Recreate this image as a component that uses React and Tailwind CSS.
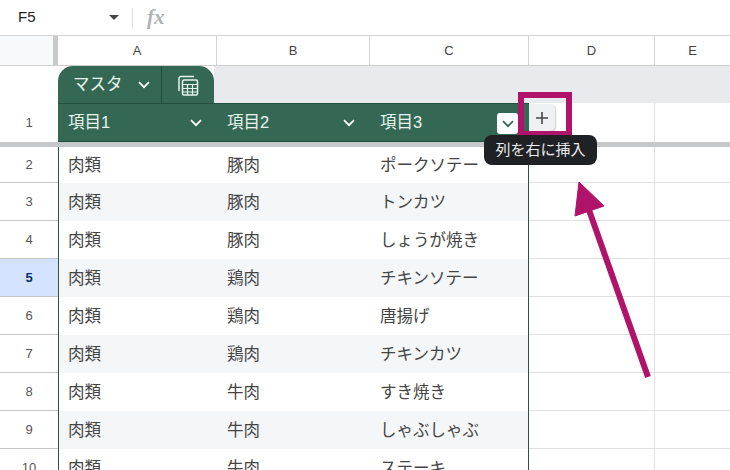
const font = { fontFamily: '"Liberation Sans","Noto Sans CJK JP",sans-serif' };
const rows = [
  [2, '肉類', '豚肉', 'ポークソテー'],
  [3, '肉類', '豚肉', 'トンカツ'],
  [4, '肉類', '豚肉', 'しょうが焼き'],
  [5, '肉類', '鶏肉', 'チキンソテー'],
  [6, '肉類', '鶏肉', '唐揚げ'],
  [7, '肉類', '鶏肉', 'チキンカツ'],
  [8, '肉類', '牛肉', 'すき焼き'],
  [9, '肉類', '牛肉', 'しゃぶしゃぶ'],
  [10, '肉類', '牛肉', 'ステーキ'],
];

function Chevron({ className = 'text-white' }) {
  return (
    <svg width="12" height="8" viewBox="0 0 12 8" className={className} fill="none" stroke="currentColor" strokeWidth="1.7">
      <path d="M1 1.2 6 6.2 11 1.2" />
    </svg>
  );
}

function HeaderCell({ w, label, active }) {
  return (
    <div className={`${w} shrink-0 h-full flex items-center justify-between pl-[10px] text-[16.500px] text-[#e6f4ee]`}>
      <span>{label}</span>
      {active ? (
        <span className="w-[21px] h-[21px] mr-[11px] mt-[2px] bg-white rounded-[3px] flex items-center justify-center">
          <Chevron className="text-[#356854]" />
        </span>
      ) : (
        <span className="mr-[15px]"><Chevron /></span>
      )}
    </div>
  );
}

export default function App() {
  return (
    <div className="relative w-[730px] h-[470px] overflow-hidden bg-white text-[#3c4043]" style={font}>
      {/* formula bar */}
      <div className="h-[36px] flex items-center border-b border-[#d4d4d4]">
        <div className="w-[132px] h-full shrink-0 flex items-center justify-between pl-[18px] pr-[12px] text-[15px] text-[#202124]">
          <span>F5</span>
          <span className="w-0 h-0 border-x-[5px] border-x-transparent border-t-[5px] border-t-[#444746] mr-[1px]" />
        </div>
        <div className="w-px h-[20px] bg-[#dadce0]" />
        <span className="ml-[14px] text-[21px] italic font-bold text-[#b0b3b6]" style={{ fontFamily: '"Liberation Serif",serif' }}>fx</span>
      </div>

      {/* column headers */}
      <div className="h-[30px] flex border-b border-[#cfcfcf] text-[13px] text-[#444]">
        <div className="w-[58px] shrink-0 bg-[#f8f9fa] border-r-[5px] border-[#c9c9c9]" />
        <div className="w-[159px] shrink-0 flex items-center justify-center border-r border-[#d4d4d4]">A</div>
        <div className="w-[153px] shrink-0 flex items-center justify-center border-r border-[#d4d4d4]">B</div>
        <div className="w-[159px] shrink-0 flex items-center justify-center border-r border-[#d4d4d4]">C</div>
        <div className="w-[126px] shrink-0 flex items-center justify-center border-r border-[#d4d4d4]">D</div>
        <div className="flex-1 flex items-center justify-center">E</div>
      </div>

      {/* table tab row */}
      <div className="h-[37px] flex">
        <div className="w-[58px] shrink-0" />
        <div className="w-[156px] shrink-0 h-full bg-[#356854] rounded-t-[15px] flex text-white">
          <div className="w-[104px] flex items-center border-r border-[#234f3e] pl-[15px] gap-[15px] text-[16.500px] text-[#e6f4ee]">
            <span>マスタ</span>
            <Chevron />
          </div>
          <div className="flex-1 flex items-center justify-center">
            <svg width="22" height="22" viewBox="0 0 22 22" fill="none" stroke="#e6f4ee" strokeWidth="1.5">
              <path d="M2 17V4.500A2 2 0 0 1 4 2.500H17" />
              <rect x="5.500" y="6" width="15" height="15" rx="1.500" />
              <path d="M5.500 10.500H20.500M5.500 14.500H20.500M5.500 18H20.500M10.500 10.500V21M15.500 10.500V21" strokeWidth="1.200" />
            </svg>
          </div>
        </div>
        <div className="flex-1 bg-[#e8eaed]" />
      </div>

      {/* row 1 */}
      <div className="h-[39px] flex">
        <div className="w-[58px] shrink-0 flex items-center justify-center text-[13px] text-[#555]">1</div>
        <div className="w-[471px] shrink-0 h-full flex bg-[#356854] border-y border-[#234f3e]">
          <HeaderCell w="w-[159px]" label="項目1" />
          <HeaderCell w="w-[153px]" label="項目2" />
          <HeaderCell w="w-[159px]" label="項目3" active />
        </div>
        <div className="w-[126px] shrink-0 border-r border-[#e0e0e0]" />
      </div>
      <div className="h-[5px] bg-[#c6c7c8]" />

      {/* rows */}
      {rows.map(([n, a, b, c], i) => {
        const selected = n === 5;
        const tint = i % 2 === 1;
        return (
          <div key={n} className={`${i === 0 ? 'h-[36px]' : 'h-[38px]'} flex`}>
            <div className={`w-[58px] shrink-0 flex items-center justify-center pt-[1px] text-[13px] border-b border-[#c4c7c5] ${selected ? 'bg-[#d3e3fd] text-[#0b2c66] font-bold' : 'text-[#555]'}`}>{n}</div>
            <div className={`w-[471px] shrink-0 flex border-x border-[#2c5243] text-[16.500px] text-[#444] ${tint ? 'bg-[#f4f6f8]' : 'bg-white'}`}>
              <div className="w-[158px] shrink-0 pl-[9px] flex items-center">{a}</div>
              <div className="w-[153px] shrink-0 pl-[10px] flex items-center">{b}</div>
              <div className="flex-1 pl-[10px] flex items-center">{c}</div>
            </div>
            <div className="w-[126px] shrink-0 border-r border-b border-[#e0e0e0]" />
            <div className="flex-1 border-b border-[#e0e0e0]" />
          </div>
        );
      })}

      {/* plus button */}
      <div className="absolute left-[529px] top-[104px] w-[26px] h-[27px] bg-[#eef0f4] rounded-r-[5px] shadow-[1px_1px_2px_rgba(0,0,0,0.2)] flex items-center justify-center">
        <svg width="14" height="14" viewBox="0 0 14 14" stroke="#444746" strokeWidth="1.600"><path d="M7 1V13M1 7H13" /></svg>
      </div>

      {/* highlight square */}
      <div className="absolute left-[518px] top-[92px] w-[54px] h-[48px] border-[6px] border-b-[9px] border-[#b0136a]" />

      {/* tooltip */}
      <div className="absolute left-[484px] top-[135px] w-[113px] h-[30px] rounded-[8px] bg-[#202124] text-[#e8eaed] text-[15px] flex items-center justify-center">列を右に挿入</div>

      {/* arrow */}
      <svg className="absolute left-[570px] top-[178px]" width="90" height="205" viewBox="0 0 90 205">
        <path d="M78 199 19 32" stroke="#b0136a" strokeWidth="6" fill="none" />
        <path d="M9 4 5 38 34 28Z" fill="#b0136a" stroke="#b0136a" strokeWidth="1" />
      </svg>
    </div>
  );
}
